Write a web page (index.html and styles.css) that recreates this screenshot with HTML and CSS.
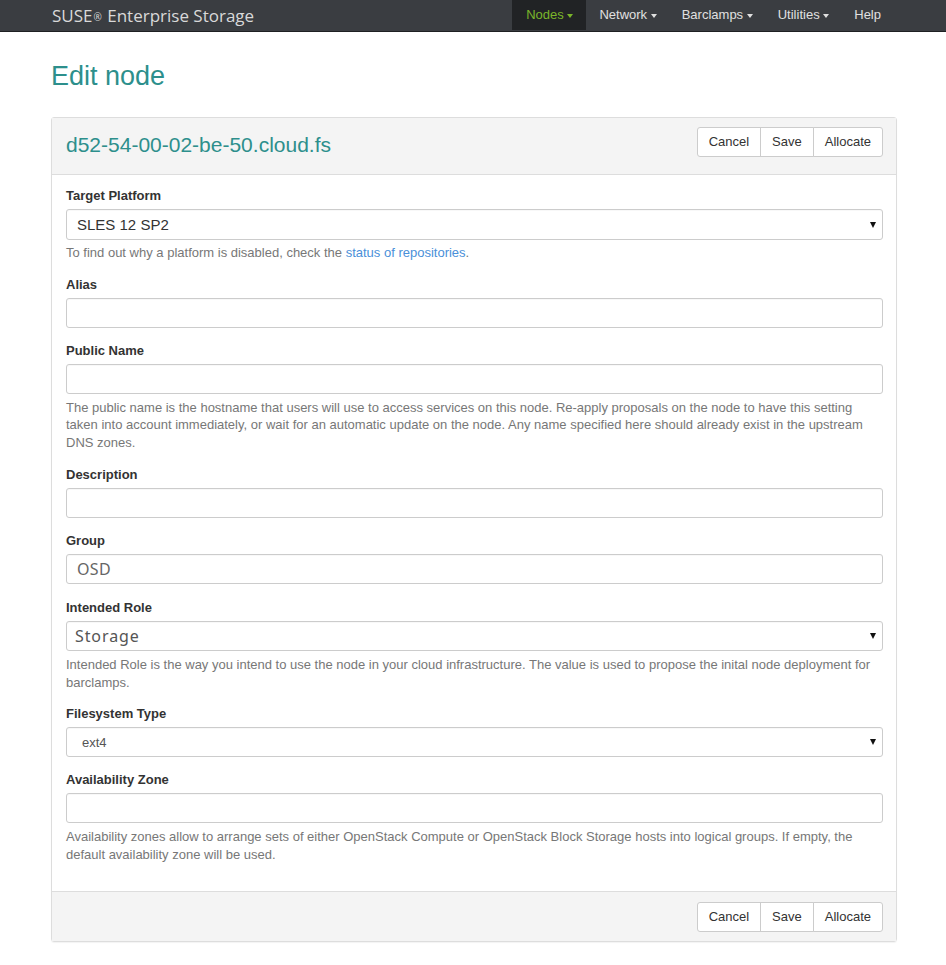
FILE: index.html
```html
<!DOCTYPE html>
<html lang="en">
<head>
<meta charset="utf-8">
<title>Edit node</title>
<link rel="stylesheet" href="styles.css">
</head>
<body>
<nav class="navbar">
  <div class="navbar-inner">
    <a class="brand" href="#">SUSE<span class="reg">®</span> Enterprise Storage</a>
    <ul class="nav">
      <li class="active"><a href="#">Nodes <span class="caret"></span></a></li>
      <li><a href="#">Network <span class="caret"></span></a></li>
      <li><a href="#">Barclamps <span class="caret"></span></a></li>
      <li><a href="#">Utilities <span class="caret"></span></a></li>
      <li><a href="#">Help</a></li>
    </ul>
  </div>
</nav>

<main class="container">
  <h1 class="page-title">Edit node</h1>

  <form class="panel">
    <div class="panel-heading">
      <h2 class="panel-title">d52-54-00-02-be-50.cloud.fs</h2>
      <div class="btn-group">
        <button type="button" class="btn">Cancel</button>
        <button type="button" class="btn">Save</button>
        <button type="button" class="btn">Allocate</button>
      </div>
    </div>

    <div class="panel-body">
      <div class="form-group">
        <label class="control-label">Target Platform</label>
        <div class="select-wrap tall">
          <select class="form-control select-lg"><option>SLES 12 SP2</option></select>
        </div>
        <p class="help-block first">To find out why a platform is disabled, check the <a href="#">status of repositories</a>.</p>
      </div>

      <div class="form-group">
        <label class="control-label">Alias</label>
        <input class="form-control" type="text">
      </div>

      <div class="form-group loose">
        <label class="control-label">Public Name</label>
        <input class="form-control" type="text">
        <p class="help-block">The public name is the hostname that users will use to access services on this node. Re-apply proposals on the node to have this setting taken into account immediately, or wait for an automatic update on the node. Any name specified here should already exist in the upstream DNS zones.</p>
      </div>

      <div class="form-group">
        <label class="control-label">Description</label>
        <input class="form-control" type="text">
      </div>

      <div class="form-group loose">
        <label class="control-label">Group</label>
        <input class="form-control input-alt" type="text" value="OSD">
      </div>

      <div class="form-group">
        <label class="control-label">Intended Role</label>
        <div class="select-wrap">
          <select class="form-control select-alt"><option>Storage</option></select>
        </div>
        <p class="help-block">Intended Role is the way you intend to use the node in your cloud infrastructure. The value is used to propose the inital node deployment for barclamps.</p>
      </div>

      <div class="form-group">
        <label class="control-label">Filesystem Type</label>
        <div class="select-wrap">
          <select class="form-control select-sm"><option>ext4</option></select>
        </div>
      </div>

      <div class="form-group">
        <label class="control-label">Availability Zone</label>
        <input class="form-control" type="text">
        <p class="help-block">Availability zones allow to arrange sets of either OpenStack Compute or OpenStack Block Storage hosts into logical groups. If empty, the default availability zone will be used.</p>
      </div>
    </div>

    <div class="panel-footer">
      <div class="btn-group">
        <button type="button" class="btn">Cancel</button>
        <button type="button" class="btn">Save</button>
        <button type="button" class="btn">Allocate</button>
      </div>
    </div>
  </form>
</main>
</body>
</html>
```

FILE: styles.css
```css
* { box-sizing: border-box; }

html, body {
  margin: 0;
  padding: 0;
  background: #fff;
}

body {
  font-family: "Liberation Sans", Arial, sans-serif;
  font-size: 13px;
  line-height: 1.38;
  color: #333;
}

a { text-decoration: none; }

/* Navbar */
.navbar {
  background: #3a3d41;
  border-bottom: 1px solid #1e2022;
  height: 32px;
}

.navbar-inner {
  width: 846px;
  margin-left: 51px;
  display: flex;
  justify-content: space-between;
  align-items: stretch;
  height: 31px;
}

.brand {
  font-family: "Open Sans", "Liberation Sans", sans-serif;
  font-size: 17px;
  color: #d9d9d9;
  line-height: 31px;
  padding-left: 1px;
}

.brand .reg {
  font-size: 10px;
  vertical-align: 1px;
  margin: 0 1px 0 1px;
}

.nav {
  list-style: none;
  margin: 0;
  padding: 0;
  display: flex;
  margin-right: 4px;
}

.nav li a {
  display: block;
  padding: 0 12px 0 13px;
  line-height: 30px;
  color: #e0e0e0;
  font-size: 13px;
}

.nav li.active a {
  background: #212325;
  color: #7ab52a;
  padding-left: 14px;
  padding-right: 13px;
}

.caret {
  display: inline-block;
  width: 0;
  height: 0;
  margin-left: 0;
  vertical-align: middle;
  border-top: 4px solid;
  border-left: 3.5px solid transparent;
  border-right: 3.5px solid transparent;
}

/* Page */
.container {
  width: 846px;
  margin-left: 51px;
}

.page-title {
  font-size: 27px;
  font-weight: 400;
  color: #2d8f8c;
  margin: 27px 0 0 0;
  line-height: 34px;
  height: 58px;
}

/* Panel */
.panel {
  border: 1px solid #ddd;
  border-radius: 3px;
  box-shadow: 0 1px 1px rgba(0,0,0,0.05);
  margin-bottom: 20px;
}

.panel-heading {
  background: #f4f4f4;
  border-bottom: 1px solid #ddd;
  height: 57px;
  padding: 9px 13px 0 14px;
  display: flex;
  justify-content: space-between;
  align-items: flex-start;
}

.panel-title {
  margin: 3px 0 0 0;
  font-size: 21px;
  font-weight: 400;
  line-height: 30px;
  color: #2d8f8c;
}

.btn-group {
  display: flex;
}

.btn {
  font-family: "Liberation Sans", Arial, sans-serif;
  font-size: 13px;
  color: #333;
  background: #fff;
  border: 1px solid #ccc;
  height: 30px;
  padding: 0 11px;
  margin: 0;
  line-height: 28px;
  border-radius: 0;
  margin-left: -1px;
}

.btn-group .btn:first-child {
  border-radius: 3px 0 0 3px;
  margin-left: 0;
}

.btn-group .btn:last-child {
  border-radius: 0 3px 3px 0;
}

.panel-body {
  padding: 12px 13px 14px 14px;
}

.form-group {
  margin-bottom: 14px;
}

.form-group.loose {
  margin-bottom: 15px;
}

.control-label {
  display: block;
  font-weight: 700;
  margin-bottom: 4px;
  line-height: 18px;
}

.form-control {
  display: block;
  width: 100%;
  height: 30px;
  border: 1px solid #ccc;
  border-radius: 3px;
  background: #fff;
  font-family: "Liberation Sans", Arial, sans-serif;
  font-size: 13px;
  color: #555;
  padding: 0 10px;
  margin: 0;
  box-shadow: inset 0 1px 1px rgba(0,0,0,0.03);
}

.input-alt {
  font-family: "Noto Sans", "DejaVu Sans", sans-serif;
  font-size: 16px;
  color: #666;
  padding-left: 10px;
  letter-spacing: 0.3px;
}

.select-wrap {
  position: relative;
}

.select-wrap::after {
  content: "";
  position: absolute;
  right: 7px;
  top: 50%;
  margin-top: -3px;
  border-top: 6px solid #111;
  border-left: 3px solid transparent;
  border-right: 3px solid transparent;
  pointer-events: none;
}

.select-wrap select {
  -webkit-appearance: none;
  appearance: none;
}

.tall select { height: 31px; }

.select-lg {
  font-size: 15px;
  color: #333;
  padding-left: 10px;
}

.select-alt {
  font-family: "Noto Sans", "DejaVu Sans", sans-serif;
  font-size: 16px;
  color: #555;
  padding-left: 8px;
  letter-spacing: 0.9px;
}

.select-sm {
  font-size: 13px;
  color: #555;
  padding-left: 15px;
}

.help-block {
  margin: 5px 0 0 0;
  color: #777;
  line-height: 17.5px;
}

.help-block.first {
  margin-top: 4px;
}

.help-block a {
  color: #4a90d9;
}

.panel-footer {
  background: #f4f4f4;
  border-top: 1px solid #ddd;
  padding: 10px 13px 9px 14px;
  display: flex;
  justify-content: flex-end;
}
```
